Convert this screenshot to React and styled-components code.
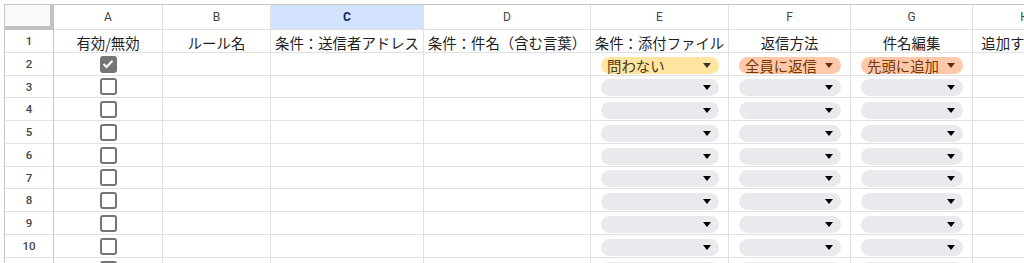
import React from 'react'
import styled, { createGlobalStyle } from 'styled-components'

const GlobalStyle = createGlobalStyle`
  html, body {
    margin: 0;
    padding: 0;
    background: #ffffff;
    overflow: hidden;
  }
  body {
    font-family: "Noto Sans CJK JP", "Noto Sans", Roboto, sans-serif;
  }
`;

const columns = [
  { key: 'A', width: 109, title: '有効/無効' },
  { key: 'B', width: 108, title: 'ルール名' },
  { key: 'C', width: 153, title: '条件：送信者アドレス' },
  { key: 'D', width: 167, title: '条件：件名（含む言葉）' },
  { key: 'E', width: 138, title: '条件：添付ファイル' },
  { key: 'F', width: 122, title: '返信方法' },
  { key: 'G', width: 122, title: '件名編集' },
  { key: 'H', width: 104, title: '追加する文言' },
];

const rowHeights = [25, 23, 23, 22, 23, 23, 23, 22, 23, 23, 23, 23];

const dataRows = [
  { checked: true, E: { label: '問わない', tone: 'yellow' }, F: { label: '全員に返信', tone: 'orange' }, G: { label: '先頭に追加', tone: 'orange' } },
  ...Array.from({ length: 9 }, () => ({ checked: false, E: {}, F: {}, G: {} })),
];

const tones = {
  yellow: { bg: '#ffe5a0', fg: '#473821', arrow: '#3d3326' },
  orange: { bg: '#ffc8aa', fg: '#753800', arrow: '#5c2e0f' },
  empty: { bg: '#e8eaed', fg: '#1f1f1f', arrow: '#000000' },
};

const Sheet = styled.div`
  display: grid;
  grid-template-columns: 49px ${columns.map(c => c.width + 'px').join(' ')};
  grid-template-rows: ${rowHeights.map(h => h + 'px').join(' ')};
  margin: 4px 0 0 4px;
  border-top: 1px solid #c4c7c5;
  border-left: 1px solid #c4c7c5;
  width: max-content;
`;

const Corner = styled.div`
  box-sizing: border-box;
  background: #f8f9fa;
  border-right: 4px solid #c2c2c2;
  border-bottom: 4px solid #c2c2c2;
`;

const ColHeader = styled.div`
  box-sizing: border-box;
  display: flex;
  align-items: center;
  justify-content: center;
  background: ${p => (p.$selected ? '#d3e3fd' : '#ffffff')};
  border-right: 1px solid #e1e1e1;
  border-bottom: 1px solid #e1e1e1;
  font-family: Roboto, "Liberation Sans", sans-serif;
  font-size: 12px;
  font-weight: ${p => (p.$selected ? 700 : 400)};
  color: ${p => (p.$selected ? '#0b2a5c' : '#444746')};
`;

const RowHeader = styled.div`
  box-sizing: border-box;
  display: flex;
  align-items: center;
  justify-content: center;
  background: #ffffff;
  border-right: 1px solid #c7c7c7;
  border-bottom: 1px solid #e1e1e1;
  font-family: Roboto, "Liberation Sans", sans-serif;
  font-size: 11.5px;
  font-weight: 500;
  color: #444746;
`;

const Cell = styled.div`
  box-sizing: border-box;
  display: flex;
  align-items: ${p => (p.$title ? 'flex-end' : 'center')};
  justify-content: center;
  padding: ${p => (p.$chip ? '2px 9px 0 10px' : p.$title ? '0 0 1px 0' : '0')};
  border-right: 1px solid #e1e1e1;
  border-bottom: 1px solid #e1e1e1;
  overflow: hidden;
  white-space: nowrap;
  font-size: 14.4px;
  line-height: 17px;
  color: #1f1f1f;
`;

const Box = styled.div`
  box-sizing: border-box;
  width: 17px;
  height: 17px;
  border-radius: 3px;
  border: 2px solid #757575;
  background: ${p => (p.$checked ? '#757575' : '#ffffff')};
  display: flex;
  align-items: center;
  justify-content: center;
`;

const Chip = styled.div`
  box-sizing: border-box;
  flex: 1;
  height: 17px;
  border-radius: 9px;
  background: ${p => tones[p.$tone].bg};
  color: ${p => tones[p.$tone].fg};
  display: flex;
  align-items: center;
  justify-content: space-between;
  padding: 0 8px 0 6px;
  font-size: 14.4px;
  line-height: 17px;
`;

const Arrow = styled.span`
  width: 0;
  height: 0;
  border-left: 4px solid transparent;
  border-right: 4px solid transparent;
  border-top: 5px solid ${p => tones[p.$tone].arrow};
  margin-left: auto;
`;

const Checkbox = ({ checked }) => (
  <Box $checked={checked}>
    {checked && (
      <svg width="12" height="10" viewBox="0 0 12 10">
        <polyline points="1.5,5 4.5,8 10.5,1.8" fill="none" stroke="#ffffff" strokeWidth="2" />
      </svg>
    )}
  </Box>
);

const Dropdown = ({ label, tone }) => {
  const t = tone || 'empty';
  return (
    <Chip $tone={t}>
      <span>{label}</span>
      <Arrow $tone={t} />
    </Chip>
  );
};

const App = () => {
  return (
    <>
      <GlobalStyle />
      <Sheet>
        <Corner />
        {columns.map(c => (
          <ColHeader key={c.key} $selected={c.key === 'C'}>{c.key}</ColHeader>
        ))}

        <RowHeader>1</RowHeader>
        {columns.map(c => (
          <Cell key={c.key} $title>{c.title}</Cell>
        ))}

        {dataRows.map((row, i) => (
          <React.Fragment key={i}>
            <RowHeader>{i + 2}</RowHeader>
            <Cell><Checkbox checked={row.checked} /></Cell>
            <Cell />
            <Cell />
            <Cell />
            {['E', 'F', 'G'].map(k => (
              <Cell key={k} $chip>
                <Dropdown label={row[k].label} tone={row[k].tone} />
              </Cell>
            ))}
            <Cell />
          </React.Fragment>
        ))}
      </Sheet>
    </>
  )
}

export default App
